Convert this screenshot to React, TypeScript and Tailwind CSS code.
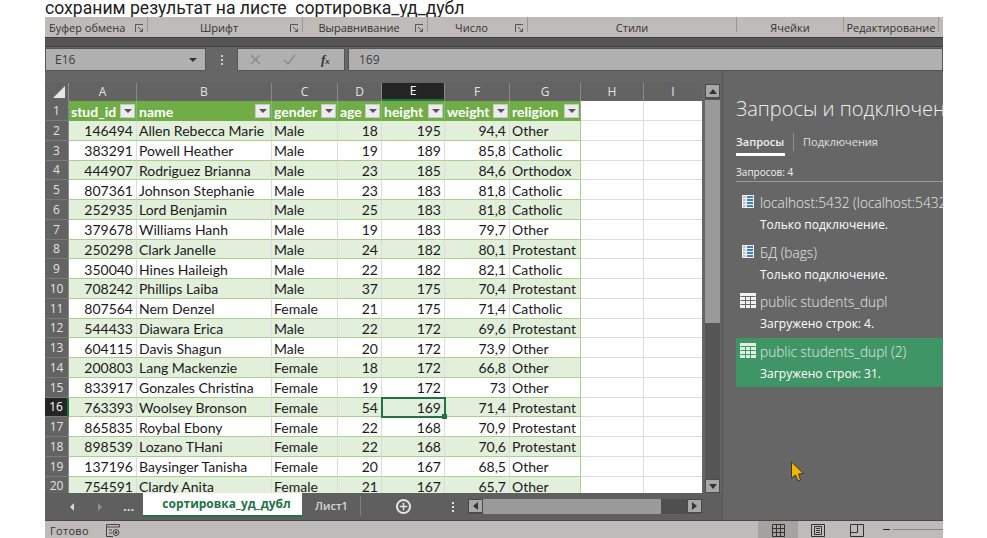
import { Plus } from "lucide-react";

const COLS = [
  { key: "A", width: "w-[68px]", title: "stud_id" },
  { key: "B", width: "w-[135px]", title: "name" },
  { key: "C", width: "w-[66px]", title: "gender" },
  { key: "D", width: "w-[44px]", title: "age" },
  { key: "E", width: "w-[63px]", title: "height" },
  { key: "F", width: "w-[65px]", title: "weight" },
  { key: "G", width: "w-[71px]", title: "religion" },
];

const ROWS: [string, string, string, string, string, string, string][] = [
  ["146494", "Allen Rebecca Marie", "Male", "18", "195", "94,4", "Other"],
  ["383291", "Powell Heather", "Male", "19", "189", "85,8", "Catholic"],
  ["444907", "Rodriguez Brianna", "Male", "23", "185", "84,6", "Orthodox"],
  ["807361", "Johnson Stephanie", "Male", "23", "183", "81,8", "Catholic"],
  ["252935", "Lord Benjamin", "Male", "25", "183", "81,8", "Catholic"],
  ["379678", "Williams Hanh", "Male", "19", "183", "79,7", "Other"],
  ["250298", "Clark Janelle", "Male", "24", "182", "80,1", "Protestant"],
  ["350040", "Hines Haileigh", "Male", "22", "182", "82,1", "Catholic"],
  ["708242", "Phillips Laiba", "Male", "37", "175", "70,4", "Protestant"],
  ["807564", "Nem Denzel", "Female", "21", "175", "71,4", "Catholic"],
  ["544433", "Diawara Erica", "Male", "22", "172", "69,6", "Protestant"],
  ["604115", "Davis Shagun", "Male", "20", "172", "73,9", "Other"],
  ["200803", "Lang Mackenzie", "Female", "18", "172", "66,8", "Other"],
  ["833917", "Gonzales Christina", "Female", "19", "172", "73", "Other"],
  ["763393", "Woolsey Bronson", "Female", "54", "169", "71,4", "Protestant"],
  ["865835", "Roybal Ebony", "Female", "22", "168", "70,9", "Protestant"],
  ["898539", "Lozano THani", "Female", "22", "168", "70,6", "Protestant"],
  ["137196", "Baysinger Tanisha", "Female", "20", "167", "68,5", "Other"],
  ["754591", "Clardy Anita", "Female", "21", "167", "65,7", "Other"],
];

const RIBBON = [
  { label: "Буфер обмена", width: "w-[103px]", launcher: true, left: true },
  { label: "Шрифт", width: "w-[155px]", launcher: true },
  { label: "Выравнивание", width: "w-[125px]", launcher: true },
  { label: "Число", width: "w-[100px]", launcher: true },
  { label: "Стили", width: "w-[209px]" },
  { label: "Ячейки", width: "w-[107px]" },
  { label: "Редактирование", width: "w-[95px]" },
];

const UI = "font-['Open_Sans',sans-serif]";
const SHEET = "font-['Lato',sans-serif]";

export default function App() {
  return (
    <div className="relative h-[538px] w-[987px] overflow-hidden bg-white">
      <div className="ml-[45px] flex h-full w-[898px] flex-col overflow-hidden">
        <h1 className="h-[17px] font-['Roboto',sans-serif] text-[17.6px] leading-[17px] whitespace-pre text-[#222]">
          сохраним результат на листе  сортировка_уд_дубл
        </h1>

        <Ribbon />
        <div className="h-[10px] border-t border-b border-t-[#3d3d3d] border-b-[#3f3f3f] bg-[#555]" />
        <FormulaBar />

        <div className="flex min-h-0 flex-1 bg-[#666]">
          <div className="flex w-[678px] flex-col border-r border-[#555]">
            <div className="flex h-[422px] pt-[11px]">
              <Sheet />
              <VerticalScroll />
            </div>
            <SheetTabs />
          </div>
          <QueriesPane />
        </div>

        <StatusBar />
      </div>

      {/* mouse pointer from the screen recording */}
      <svg className="absolute left-[790px] top-[461px]" width="15" height="21" viewBox="0 0 15 21">
        <path d="M1.5 1 L1.5 17 L5.5 14 L8 20 L10.5 19 L8.5 13 L13.5 12.5 Z" fill="#f4b400" stroke="#3a3a2a" strokeWidth="1" />
      </svg>
    </div>
  );
}

function Ribbon() {
  return (
    <div className={`flex h-[20px] bg-[#bfbbb8] text-[11px] text-[#333] ${UI}`}>
      {RIBBON.map((g) => (
        <div key={g.label} className={`relative flex h-[15px] shrink-0 items-center border-r border-[#9a9794] pt-[7px] ${g.width}`}>
          <span className={`whitespace-nowrap ${g.left ? "pl-[4px]" : "w-full text-center"} ${!g.left && g.launcher ? "pr-[12px]" : ""}`}>
            {g.label}
          </span>
          {g.launcher && <Launcher />}
        </div>
      ))}
    </div>
  );
}

function Launcher() {
  return (
    <svg className="absolute right-[3px] top-[7px]" width="9" height="9" viewBox="0 0 9 9" fill="none" stroke="#555" strokeWidth="1">
      <path d="M0.5 8 V0.5 H8" />
      <path d="M3 3 L7.5 7.5 M7.5 4.5 V7.5 H4.5" />
    </svg>
  );
}

function FormulaBar() {
  return (
    <div className={`flex h-[24px] items-stretch bg-[#666] pt-px text-[12px] text-[#3d3d3d] ${UI}`}>
      <div className="flex w-[161px] items-center justify-between border border-[#555] bg-[#b0b0b0] pr-[8px] pl-[9px]">
        <span>E16</span>
        <span className="h-0 w-0 border-x-[4px] border-t-[4px] border-x-transparent border-t-[#333]" />
      </div>
      <div className="flex w-[31px] flex-col items-center justify-center gap-[2px]">
        <span className="h-[2px] w-[2px] bg-[#ccc]" />
        <span className="h-[2px] w-[2px] bg-[#ccc]" />
        <span className="h-[2px] w-[2px] bg-[#ccc]" />
      </div>
      <div className="flex w-[108px] items-center border border-[#555] bg-[#b0b0b0]">
        <svg className="ml-[12px]" width="11" height="11" viewBox="0 0 11 11" stroke="#8b8b8b" strokeWidth="1.4">
          <path d="M1 1 L10 10 M10 1 L1 10" />
        </svg>
        <svg className="ml-[22px]" width="13" height="11" viewBox="0 0 13 11" fill="none" stroke="#8b8b8b" strokeWidth="1.6">
          <path d="M1 6 L5 10 L12 1" />
        </svg>
        <span className="ml-[25px] font-['Liberation_Serif',serif] text-[13px] font-bold text-[#333] italic">
          f<span className="text-[9px]">x</span>
        </span>
      </div>
      <div className="ml-[3px] flex flex-1 items-center border border-[#555] bg-[#b0b0b0] pl-[10px]">169</div>
    </div>
  );
}

function Sheet() {
  return (
    <div className={`flex h-full w-[657px] flex-col overflow-hidden ${SHEET}`}>
      <div className={`flex h-[19px] shrink-0 bg-[#636363] pt-px text-[12px] text-[#e2e2e2] ${UI}`}>
        <div className="relative w-[24px] border-r border-[#8a8a8a]">
          <span className="absolute right-[3px] bottom-[3px] h-0 w-0 border-b-[12px] border-l-[12px] border-b-[#e6e6e6] border-l-transparent" />
        </div>
        {COLS.map((c) => (
          <div
            key={c.key}
            className={`flex items-center justify-center border-r border-[#8a8a8a] ${c.width} ${
              c.key === "E" ? "border-b-2 border-b-[#217346] bg-[#252525] text-white" : ""
            }`}
          >
            {c.key}
          </div>
        ))}
        <div className="flex w-[63px] items-center justify-center border-r border-[#8a8a8a]">H</div>
        <div className="flex w-[58px] items-center justify-center">I</div>
      </div>

      <div className="flex h-[20px] shrink-0">
        <RowHeader n={1} />
        {COLS.map((c) => (
          <div
            key={c.key}
            className={`flex items-center justify-between border-r border-[#87b865] bg-[#70ad47] pr-[1px] pl-[2px] text-[14px] font-bold text-white ${c.width}`}
          >
            <span>{c.title}</span>
            <FilterButton />
          </div>
        ))}
        <BlankCells />
      </div>

      {ROWS.map((row, i) => (
        <div key={row[0]} className="flex h-[19.75px] shrink-0">
          <RowHeader n={i + 2} selected={i + 2 === 16} />
          {row.map((value, j) => {
            const numeric = j === 0 || (j >= 3 && j <= 5);
            const selected = i + 2 === 16 && j === 4;
            return (
              <div
                key={j}
                className={`relative flex items-center border-b border-[#a9d08e] pt-px text-[14px] whitespace-nowrap text-[#1a1a1a] ${COLS[j].width} ${
                  i % 2 === 0 ? "bg-[#e2efda]" : "bg-white"
                } ${numeric ? "justify-end pr-[3px]" : "pl-[2px]"} ${j === 6 ? "border-r border-r-[#a9d08e]" : "border-r border-r-[#dcdcdc]"} ${
                  selected ? "z-10 outline-2 -outline-offset-1 outline-[#217346]" : ""
                }`}
              >
                {value}
                {selected && <span className="absolute right-[-3px] bottom-[-3px] h-[5px] w-[5px] bg-[#217346]" />}
              </div>
            );
          })}
          <BlankCells />
        </div>
      ))}
    </div>
  );
}

function RowHeader({ n, selected }: { n: number; selected?: boolean }) {
  return (
    <div
      className={`flex w-[24px] shrink-0 items-center justify-center border-b border-[#7a7a7a] pt-px text-[12px] ${UI} ${
        selected ? "border-r-2 border-r-[#217346] bg-[#252525] text-white" : "border-r border-r-[#8a8a8a] bg-[#636363] text-[#e2e2e2]"
      }`}
    >
      {n}
    </div>
  );
}

function BlankCells() {
  return (
    <>
      <div className="w-[63px] border-r border-b border-[#dcdcdc] bg-white" />
      <div className="w-[58px] border-b border-[#dcdcdc] bg-white" />
    </>
  );
}

function FilterButton() {
  return (
    <span className="flex h-[14px] w-[15px] shrink-0 items-center justify-center border border-[#c8c8c8] bg-[#ececec]">
      <span className="h-0 w-0 border-x-[4px] border-t-[4px] border-x-transparent border-t-[#555]" />
    </span>
  );
}

function VerticalScroll() {
  return (
    <div className="mt-[2px] ml-[3px] flex h-[409px] w-[15px] flex-col bg-[#555]">
      <ScrollButton dir="up" />
      <div className="mt-[2px] h-[223px] bg-[#9a9a9a]" />
      <div className="flex-1" />
      <ScrollButton dir="down" />
    </div>
  );
}

function ScrollButton({ dir }: { dir: "up" | "down" | "left" | "right" }) {
  const arrow = {
    up: "border-x-[4px] border-b-[5px] border-x-transparent border-b-[#333]",
    down: "border-x-[4px] border-t-[5px] border-x-transparent border-t-[#333]",
    left: "border-y-[4px] border-r-[5px] border-y-transparent border-r-[#333]",
    right: "border-y-[4px] border-l-[5px] border-y-transparent border-l-[#333]",
  }[dir];
  return (
    <div className="flex h-[14px] w-[15px] shrink-0 items-center justify-center border border-[#4a4a4a] bg-[#a8a8a8]">
      <span className={`h-0 w-0 ${arrow}`} />
    </div>
  );
}

function SheetTabs() {
  return (
    <div className={`flex h-[27px] items-start bg-[#5f5f5f] ${UI}`}>
      <div className="flex h-[27px] w-[98px] items-center text-[#d8d8d8]">
        <span className="ml-[25px] h-0 w-0 border-y-[4px] border-r-[4px] border-y-transparent border-r-[#d8d8d8]" />
        <span className="ml-[24px] h-0 w-0 border-y-[4px] border-l-[4px] border-y-transparent border-l-[#8f8f8f]" />
        <span className="ml-[21px] text-[13px] font-bold">...</span>
      </div>
      <div className="flex h-[24px] w-[159px] items-center justify-center border-b-2 border-[#217346] bg-white pl-[8px] text-[12px] font-bold text-[#217346]">
        сортировка_уд_дубл
      </div>
      <div className="flex h-[27px] w-[58px] items-center justify-center pl-[1px] text-[11px] font-semibold text-[#d8d8d8]">Лист1</div>
      <div className="mt-[3px] h-[20px] w-px bg-[#7c7c7c]" />
      <div className="flex h-[27px] w-[84px] items-center justify-center">
        <span className="flex h-[15px] w-[15px] items-center justify-center rounded-full border-2 border-[#e4e4e4] text-[#e4e4e4]">
          <Plus size={11} strokeWidth={3} />
        </span>
      </div>
      <div className="flex h-[27px] w-[16px] flex-col items-center justify-center gap-[2px]">
        <span className="h-[2px] w-[2px] bg-[#e4e4e4]" />
        <span className="h-[2px] w-[2px] bg-[#e4e4e4]" />
        <span className="h-[2px] w-[2px] bg-[#e4e4e4]" />
      </div>
      <div className="mt-[6px] ml-[7px] flex h-[15px] w-[234px] bg-[#4f4f4f]">
        <ScrollButton dir="left" />
        <div className="w-[178px] bg-[#9a9a9a]" />
        <div className="flex-1" />
        <ScrollButton dir="right" />
      </div>
    </div>
  );
}

function QueriesPane() {
  return (
    <div className={`min-w-0 flex-1 overflow-hidden text-[#f0f0f0] ${UI}`}>
      <div className="mt-[24px] ml-[13px] text-[20px] leading-[28px] font-light whitespace-nowrap">Запросы и подключения</div>
      <div className="mt-[10px] ml-[13px] flex h-[23px] text-[11px]">
        <div className="relative w-[49px] pt-[1px] font-semibold">
          Запросы
          <span className="absolute bottom-0 left-0 h-[3px] w-full bg-white" />
        </div>
        <div className="ml-[8px] h-[18px] w-px bg-[#8f8f8f]" />
        <div className="ml-[9px] pt-[1px] font-medium text-[#e0e0e0]">Подключения</div>
      </div>
      <div className="mt-[10px] ml-[13px] h-[16px] border-b border-[#9a9a9a] text-[10px] leading-[13px]">Запросов: 4</div>
      <div className="mt-[7px]">
        <QueryItem icon="db" title="localhost:5432 (localhost:5432)" sub="Только подключение." />
        <QueryItem icon="db" title="БД (bags)" sub="Только подключение." />
        <QueryItem icon="table" title="public students_dupl" sub="Загружено строк: 4." />
        <QueryItem icon="table" title="public students_dupl (2)" sub="Загружено строк: 31." active />
      </div>
    </div>
  );
}

function QueryItem({ icon, title, sub, active }: { icon: "db" | "table"; title: string; sub: string; active?: boolean }) {
  return (
    <div className={`ml-[13px] flex h-[49.5px] pt-[3px] ${active ? "bg-[#3f9565]" : ""}`}>
      <div className="flex w-[24px] shrink-0 justify-center pt-[1px]">
        {icon === "db" ? <ConnIcon /> : <TableIcon green={active} />}
      </div>
      <div className="min-w-0">
        <div className="h-[25px] text-[13.7px] leading-[22px] font-light whitespace-nowrap text-[#e8e8e8]">{title}</div>
        <div className="text-[12px] leading-[15px] whitespace-nowrap text-white">{sub}</div>
      </div>
    </div>
  );
}

function ConnIcon() {
  return (
    <svg className="mt-[2px]" width="12" height="13" viewBox="0 0 12 13">
      <rect width="12" height="13" fill="#f2f2f2" />
      <path d="M1 2 H3.5 M1 5 H3.5 M1 8 H3.5 M1 11 H3.5" stroke="#8a8a8a" strokeWidth="1" />
      <path d="M5 2 H11 M5 5 H11 M5 8 H11 M5 11 H11" stroke="#3f7fc4" strokeWidth="2" />
    </svg>
  );
}

function TableIcon({ green }: { green?: boolean }) {
  const line = green ? "#3f9565" : "#666";
  return (
    <svg className="mt-[1px]" width="16" height="15" viewBox="0 0 16 15">
      <rect width="16" height="15" fill={green ? "#dff0e5" : "#f2f2f2"} />
      <path d="M0.5 3.5 H15.5 M0.5 7.5 H15.5 M0.5 11.5 H15.5 M5.5 3.5 V15 M10.5 3.5 V15" stroke={line} strokeWidth="1" />
    </svg>
  );
}

function StatusBar() {
  return (
    <div className={`flex h-[18px] shrink-0 items-center border-t border-[#4a4a4a] bg-[#bfbbb8] text-[11px] tracking-[0.3px] text-[#333] ${UI}`}>
      <span className="ml-[5px] w-[60px] pt-[3px]">Готово</span>
      <svg className="mt-[2px] -ml-[4px]" width="14" height="13" viewBox="0 0 14 13" fill="none" stroke="#444" strokeWidth="1">
        <path d="M0.5 0.5 H13.5 V3 H0.5 Z M0.5 3 V12.5 H7 M3 6 H6 M3 9 H6" />
        <circle cx="10" cy="8.5" r="3" />
        <circle cx="10" cy="8.5" r="1" fill="#444" />
      </svg>
      <div className="ml-[638px] flex h-full w-[40px] items-center justify-center bg-[#a5a3a1]">
        <svg className="mt-[1px]" width="13" height="13" viewBox="0 0 13 13" fill="none" stroke="#333" strokeWidth="1">
          <path d="M0.5 0.5 H12.5 V12.5 H0.5 Z M4.5 0.5 V12.5 M8.5 0.5 V12.5 M0.5 4.5 H12.5 M0.5 8.5 H12.5" />
        </svg>
      </div>
      <div className="flex w-[39px] justify-center">
        <svg className="mt-[1px]" width="14" height="13" viewBox="0 0 14 13" fill="none" stroke="#333" strokeWidth="1">
          <path d="M0.5 0.5 H13.5 V12.5 H0.5 Z M3.5 2.5 H10.5 V10.5 H3.5 Z M5 4.5 H9 M5 6.5 H9 M5 8.5 H9" />
        </svg>
      </div>
      <div className="flex w-[40px] justify-center">
        <svg className="mt-[1px]" width="14" height="13" viewBox="0 0 14 13" fill="none" stroke="#333" strokeWidth="1">
          <path d="M0.5 0.5 H13.5 V12.5 H0.5 Z M0.5 8.5 H7.5 V0.5" />
        </svg>
      </div>
      <span className="ml-[6px] h-px w-[7px] bg-[#222]" />
      <span className="ml-[3px] h-px flex-1 bg-[#8a8785]" />
    </div>
  );
}
